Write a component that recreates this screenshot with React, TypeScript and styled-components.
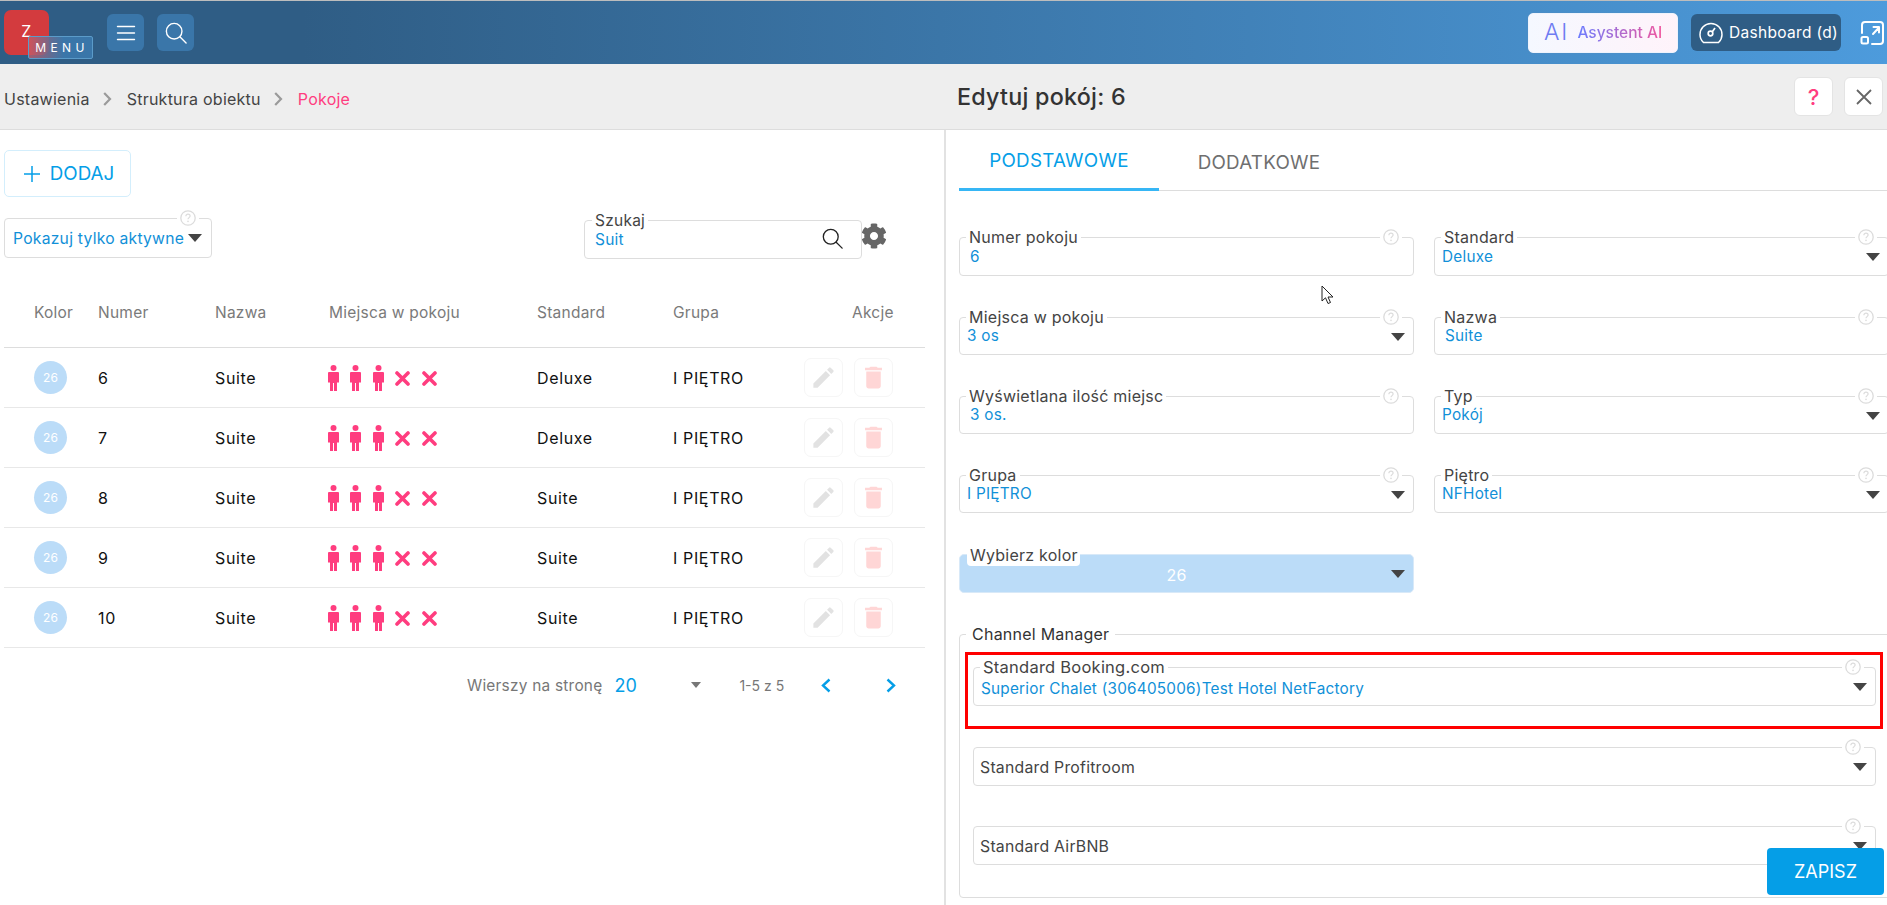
import React from "react";
import styled, { createGlobalStyle } from "styled-components";
import { MdEdit, MdDelete } from "react-icons/md";
import { FaCog } from "react-icons/fa";

const Global = createGlobalStyle`
  html, body { margin: 0; padding: 0; height: 905px; overflow: hidden; background: #fff; }
  body { font-family: Inter, "Liberation Sans", sans-serif; font-size: 16px; color: #333; letter-spacing: 0.015em; }
  * { box-sizing: border-box; }
`;

const Page = styled.div`
  position: relative;
  width: 1887px;
  height: 905px;
  overflow: hidden;
  display: flex;
  flex-direction: column;
  border-top: 1px solid #bdbdbd;
`;

const TopBar = styled.header`
  height: 63px;
  flex: none;
  display: flex;
  align-items: center;
  padding: 0 3px 0 4px;
  background: linear-gradient(90deg, #2f5d85 0%, #2f5d85 16%, #4d9bdc 100%);
`;

const Logo = styled.div`
  position: relative;
  width: 45px;
  height: 45px;
  border-radius: 7px;
  background: #d33b3e;
  color: #fff;
  font-size: 16px;
  display: flex;
  align-items: center;
  justify-content: center;
  padding-bottom: 3px;
  flex: none;
`;

const MenuTag = styled.div`
  position: absolute;
  left: 24px;
  top: 26px;
  width: 65px;
  height: 23px;
  border: 1px solid #5b9bc9;
  border-radius: 2px;
  background: linear-gradient(90deg, rgba(205, 90, 100, 0.75), #3a76a9 55%);
  font-size: 12px;
  letter-spacing: 4.4px;
  display: flex;
  align-items: center;
  justify-content: center;
  padding-left: 3px;
`;

const SquareButton = styled.button`
  width: 37px;
  height: 37px;
  border: 0;
  border-radius: 6px;
  background: #3a76a9;
  display: flex;
  align-items: center;
  justify-content: center;
  padding: 0;
  flex: none;
`;

const MenuSquare = styled(SquareButton)`
  margin-left: 58px;
  margin-right: 13px;
`;

const Spacer = styled.div`
  flex: 1;
`;

const AiButton = styled.button`
  width: 150px;
  height: 40px;
  border: 1px solid #eef3fc;
  border-radius: 5px;
  background: linear-gradient(90deg, #f5f8ff, #fff3fa);
  display: flex;
  align-items: center;
  justify-content: center;
  gap: 8px;
  padding: 0;
  font-family: inherit;
  box-shadow: 0 0 0 1px rgba(90, 140, 190, 0.2);
`;

const AiMark = styled.span`
  font-size: 23px;
  font-weight: 300;
  color: #6f7cf2;
  letter-spacing: 2px;
  line-height: 1;
`;

const AiText = styled.span`
  font-size: 15.5px;
  font-weight: 500;
  letter-spacing: 0;
  background: linear-gradient(90deg, #6a7cff, #f0589f);
  -webkit-background-clip: text;
  background-clip: text;
  color: transparent;
`;

const DashButton = styled.button`
  width: 150px;
  height: 37px;
  margin-left: 13px;
  border: 0;
  border-radius: 6px;
  background: #2f5d85;
  color: #fff;
  font-family: inherit;
  font-size: 15.5px;
  letter-spacing: 0.02em;
  display: flex;
  align-items: center;
  gap: 6px;
  padding: 0 0 0 8px;
`;

const ExpandLink = styled.span`
  margin-left: 19px;
  display: flex;
`;

const CrumbBar = styled.div`
  height: 66px;
  flex: none;
  display: flex;
  align-items: center;
  background: #eee;
  border-bottom: 1px solid #ddd;
  padding-right: 4px;
`;

const Crumbs = styled.nav`
  width: 945px;
  padding: 4px 0 0 4px;
  display: flex;
  align-items: center;
  font-size: 16px;
  color: #444;
`;

const CrumbCurrent = styled.span`
  color: #ff3d7f;
`;

const CrumbSep = styled.span`
  display: flex;
  margin: 0 15px 0 13px;
`;

const Title = styled.h1`
  margin: 0;
  padding-left: 12px;
  font-size: 23.3px;
  font-weight: 500;
  color: #333;
  flex: 1;
`;

const BarButton = styled.button`
  width: 39px;
  height: 39px;
  margin-left: 11px;
  border: 1px solid #e4e4e4;
  border-radius: 6px;
  background: #fff;
  color: #ff3d7f;
  font-family: inherit;
  font-size: 22px;
  font-weight: 500;
  padding: 0;
  display: flex;
  align-items: center;
  justify-content: center;
`;

const Main = styled.main`
  flex: 1;
  display: flex;
  min-height: 0;
`;

const LeftPane = styled.section`
  width: 946px;
  flex: none;
  border-right: 2px solid #e2e2e2;
  padding: 20px 20px 0 4px;
`;

const AddButton = styled.button`
  width: 127px;
  height: 47px;
  border: 1px solid #d3eefc;
  border-radius: 5px;
  background: #fff;
  color: #059ee7;
  font-family: inherit;
  font-size: 18.8px;
  display: flex;
  align-items: center;
  justify-content: center;
  gap: 10px;
  padding: 0 0 0 3px;
`;

const FilterRow = styled.div`
  display: flex;
  margin-top: 21px;
  height: 40px;
`;

const FilterSelect = styled.div`
  position: relative;
  width: 208px;
  height: 40px;
  border: 1px solid #ddd;
  border-radius: 4px;
  display: flex;
  align-items: center;
  justify-content: space-between;
  padding: 0 9px 0 8px;
  color: #1190d8;
  font-size: 15.7px;
`;

const SearchBox = styled.div`
  position: relative;
  width: 278px;
  height: 39px;
  margin-left: 372px;
  margin-top: 2px;
  border: 1px solid #ddd;
  border-radius: 4px;
  padding: 9px 0 0 10px;
  color: #1190d8;
  font-size: 15.5px;
`;

const SearchLabel = styled.span`
  position: absolute;
  left: 7px;
  top: -9px;
  padding: 0 3px;
  background: #fff;
  color: #444;
  font-size: 15.5px;
  line-height: 18px;
`;

const SearchIcon = styled.span`
  position: absolute;
  right: 18px;
  top: 7px;
  display: flex;
`;

const GearWrap = styled.span`
  margin: 5px 0 0 -1px;
  display: flex;
  color: #666;
  height: 26px;
  width: 26px;
`;

const Grid = styled.div`
  display: grid;
  grid-template-columns: 64px 117px 114px 208px 136px 131px 90px;
  padding-left: 30px;
  width: 921px;
  align-items: center;
`;

const HeadRow = styled(Grid)`
  margin-top: 30px;
  height: 60px;
  padding-bottom: 10px;
  border-bottom: 1px solid #ddd;
  color: #7a7a7a;
  font-size: 15.5px;
`;

const AkcjeHead = styled.span`
  padding-left: 48px;
`;

const Row = styled(Grid)`
  height: 60px;
  border-bottom: 1px solid #e8e8e8;
  color: #111;
  font-size: 16px;
  letter-spacing: 0.04em;
`;

const RowText = styled.span`
  padding-top: 1px;
`;

const ColorDot = styled.span`
  width: 33px;
  height: 33px;
  border-radius: 50%;
  background: #bbdcf8;
  color: #fff;
  font-size: 12px;
  letter-spacing: 0;
  display: flex;
  align-items: center;
  justify-content: center;
`;

const Seats = styled.span`
  display: flex;
  align-items: center;
  height: 27px;
  margin-left: -1px;
`;

const SeatSlot = styled.span`
  width: 22.3px;
  display: flex;
  justify-content: flex-start;
`;

const CrossSlot = styled.span`
  width: 27px;
  display: flex;
  margin-top: 2px;
`;

const Actions = styled.span`
  display: flex;
  gap: 11px;
`;

const ActionButton = styled.button<{ $tone: string }>`
  width: 39px;
  height: 39px;
  padding: 0;
  border: 1px solid #f6f6f6;
  border-radius: 7px;
  background: #fff;
  color: ${(p) => p.$tone};
  display: flex;
  align-items: center;
  justify-content: center;
`;

const Pager = styled.div`
  display: flex;
  align-items: center;
  height: 34px;
  margin-top: 20px;
  padding-left: 463px;
  color: #777;
  font-size: 15.4px;
`;

const PagerSize = styled.span`
  width: 77px;
  margin-left: 12px;
  color: #059ee7;
  font-size: 18px;
`;

const PagerCount = styled.span`
  width: 44px;
  margin-left: 38px;
  margin-right: 38px;
  font-size: 14px;
  letter-spacing: 0;
  white-space: nowrap;
`;

const PagerArrow = styled.span<{ $gap?: number }>`
  display: flex;
  margin-left: ${(p) => p.$gap ?? 0}px;
`;

const RightPane = styled.section`
  flex: 1;
  min-width: 0;
  overflow: hidden;
  padding-left: 13px;
`;

const RightInner = styled.div`
  width: 930px;
`;

const Tabs = styled.div`
  display: flex;
  height: 61px;
  border-bottom: 1px solid #ddd;
`;

const Tab = styled.div<{ $active?: boolean }>`
  width: 200px;
  height: 61px;
  display: flex;
  align-items: center;
  justify-content: center;
  padding-top: 3px;
  font-size: 18.8px;
  color: ${(p) => (p.$active ? "#059ee7" : "#6f6f6f")};
  border-bottom: ${(p) => (p.$active ? "3px solid #36b6f5" : "0")};
`;

const FormGrid = styled.div`
  display: grid;
  grid-template-columns: 455px 455px;
  grid-template-rows: 39px 38px 38px 38px;
  column-gap: 20px;
  row-gap: 41px;
  margin-top: 46px;
`;

const Field = styled.div`
  position: relative;
  height: 100%;
  border: 1px solid #ddd;
  border-radius: 4px;
  background: #fff;
`;

const TallField = styled(Field)`
  height: 39px;
`;

const FieldLabel = styled.span`
  position: absolute;
  left: 6px;
  top: -10px;
  padding: 0 3px;
  background: #fff;
  color: #444;
  font-size: 16px;
  line-height: 18px;
  white-space: nowrap;
`;

const FieldValue = styled.span<{ $select?: boolean; $top?: number }>`
  position: absolute;
  left: ${(p) => (p.$select ? 7 : 10)}px;
  top: ${(p) => p.$top ?? 9}px;
  color: #1190d8;
  font-size: 15.3px;
  line-height: 18px;
  white-space: nowrap;
`;

const FieldPlaceholder = styled.span`
  position: absolute;
  left: 6px;
  top: 11px;
  color: #444;
  font-size: 15.8px;
  line-height: 18px;
`;

const HelpBadge = styled.span`
  position: absolute;
  right: 11px;
  top: -11px;
  width: 22px;
  height: 20px;
  background: #fff;
  display: flex;
  align-items: center;
  justify-content: center;
`;

const FilterHelp = styled(HelpBadge)`
  right: 12px;
  top: -11px;
`;

const Caret = styled.span<{ $tone?: string; $w?: number }>`
  width: 0;
  height: 0;
  border-left: ${(p) => (p.$w ?? 14) / 2}px solid transparent;
  border-right: ${(p) => (p.$w ?? 14) / 2}px solid transparent;
  border-top: ${(p) => ((p.$w ?? 14) / 2) + 1}px solid ${(p) => p.$tone ?? "#444"};
  flex: none;
`;

const FieldCaret = styled(Caret)`
  position: absolute;
  right: 8px;
  top: 15px;
`;

const ColorField = styled.div`
  position: relative;
  height: 39px;
  margin-top: 41px;
  width: 455px;
  border: 1px solid #d8e9f8;
  border-radius: 5px;
  background: #bbdcf8;
  color: #fff;
  display: flex;
  align-items: center;
  justify-content: center;
  padding: 2px 20px 0 0;
  font-size: 16px;
`;

const ColorLabel = styled(FieldLabel)`
  border-radius: 4px;
  top: -8px;
  left: 7px;
  line-height: 16px;
  padding: 0 2px 3px 3px;
`;

const Channel = styled.div`
  position: relative;
  margin-top: 41px;
  height: 264px;
  border: 1px solid #ddd;
  border-radius: 4px;
  padding: 17px 5px 0 5px;
  width: 940px;
`;

const ChannelLegend = styled.span`
  position: absolute;
  left: 6px;
  top: -10px;
  padding: 0 6px;
  background: #fff;
  color: #333;
  font-size: 16px;
  line-height: 18px;
`;

const Highlight = styled.div`
  width: 918px;
  height: 77px;
  border: 3px solid #f00;
  padding: 12px 4px 0 5px;
`;

const BookingLabel = styled(FieldLabel)`
  font-size: 16.5px;
`;

const ChannelFields = styled.div`
  width: 903px;
  margin: 18px 0 0 8px;
  display: flex;
  flex-direction: column;
  gap: 40px;
`;

const SaveButton = styled.button`
  position: absolute;
  left: 1767px;
  top: 847px;
  width: 117px;
  height: 47px;
  border: 0;
  border-radius: 4px;
  background: #059ee7;
  color: #fff;
  font-family: inherit;
  font-size: 18px;
  padding: 0;
`;

const Pointer = styled.svg`
  position: absolute;
  left: 1321px;
  top: 284px;
`;

const Help = () => (
  <svg width="16" height="16" viewBox="0 0 16 16" fill="none">
    <circle cx="8" cy="8" r="7.2" stroke="#dcdcdc" strokeWidth="1.3" />
    <path d="M5.9 6.2c0-1.2 1-2 2.1-2s2.1.8 2.1 1.9c0 1.5-2.1 1.6-2.1 3.2" stroke="#dcdcdc" strokeWidth="1.2" />
    <circle cx="8" cy="11.4" r=".8" fill="#dcdcdc" />
  </svg>
);

const Magnifier = ({ size, color, sw }: { size: number; color: string; sw: number }) => (
  <svg width={size} height={size} viewBox="0 0 24 24" fill="none" stroke={color} strokeWidth={sw} strokeLinecap="round">
    <circle cx="10" cy="10" r="8.5" />
    <path d="M16.2 16.2 23 23" />
  </svg>
);

const Chevron = () => (
  <svg width="9" height="14" viewBox="0 0 9 14" fill="none" stroke="#9a9a9a" strokeWidth="2.2">
    <path d="M1.2 1 7 7l-5.8 6" />
  </svg>
);

const Person = () => (
  <svg width="11" height="26" viewBox="0 0 11 26" fill="#ff3d7f">
    <circle cx="5.5" cy="3" r="3" />
    <path d="M1 7h9a1 1 0 0 1 1 1v9.5H9V26H6V18H5v8H2v-8.500H0V8a1 1 0 0 1 1-1z" />
  </svg>
);

const Cross = () => (
  <svg width="15" height="15" viewBox="0 0 15 15" stroke="#ff3d7f" strokeWidth="3.6" strokeLinecap="round">
    <path d="M2 2l11 11M13 2 2 13" />
  </svg>
);

const PagerChevron = ({ left }: { left?: boolean }) => (
  <svg width="10" height="15" viewBox="0 0 10 15" fill="none" stroke="#059ee7" strokeWidth="2.4" style={left ? { transform: "scaleX(-1)" } : undefined}>
    <path d="M1.500 1.500 8 7.500l-6.500 6" />
  </svg>
);

const rooms = [
  { nr: "6", std: "Deluxe" },
  { nr: "7", std: "Deluxe" },
  { nr: "8", std: "Suite" },
  { nr: "9", std: "Suite" },
  { nr: "10", std: "Suite" },
];

const fields = [
  { label: "Numer pokoju", value: "6", top: 10 },
  { label: "Standard", value: "Deluxe", select: true, top: 10 },
  { label: "Miejsca w pokoju", value: "3 os", select: true },
  { label: "Nazwa", value: "Suite" },
  { label: "Wyświetlana ilość miejsc", value: "3 os." },
  { label: "Typ", value: "Pokój", select: true },
  { label: "Grupa", value: "I PIĘTRO", select: true },
  { label: "Piętro", value: "NFHotel", select: true },
];

export default function App() {
  return (
    <Page>
      <Global />
      <TopBar>
        <Logo>
          Z<MenuTag>MENU</MenuTag>
        </Logo>
        <MenuSquare aria-label="menu">
          <svg width="20" height="16" viewBox="0 0 20 16" stroke="#fff" strokeWidth="1.4" strokeLinecap="round">
            <path d="M1.500 1.500h17M1.500 8h17M1.500 14.500h17" />
          </svg>
        </MenuSquare>
        <SquareButton aria-label="szukaj">
          <Magnifier size={22} color="#fff" sw={1.5} />
        </SquareButton>
        <Spacer />
        <AiButton>
          <AiMark>AI</AiMark>
          <AiText>Asystent AI</AiText>
        </AiButton>
        <DashButton>
          <svg width="24" height="24" viewBox="0 0 24 24" fill="none" stroke="#fff" strokeWidth="1.5">
            <path d="M4.500 21.500a11 11 0 1 1 15 0z" />
            <circle cx="11.500" cy="12.500" r="2.300" strokeWidth="1.700" />
            <path d="M13.500 10.500 16 7" strokeWidth="1.700" />
          </svg>
          Dashboard (d)
        </DashButton>
        <ExpandLink>
          <svg width="24" height="24" viewBox="0 0 24 24" fill="none" stroke="#fff" strokeWidth="2" strokeLinecap="round" strokeLinejoin="round">
            <path d="M2 12V4a3 3 0 0 1 3-3h15a3 3 0 0 1 3 3v16a3 3 0 0 1-3 3H12" />
            <path d="M13 13 19 6.500M13.500 6h5.500v5.500" />
            <rect x="1.500" y="16" width="6.500" height="6.500" rx="1.500" />
          </svg>
        </ExpandLink>
      </TopBar>

      <CrumbBar>
        <Crumbs>
          Ustawienia
          <CrumbSep><Chevron /></CrumbSep>
          Struktura obiektu
          <CrumbSep><Chevron /></CrumbSep>
          <CrumbCurrent>Pokoje</CrumbCurrent>
        </Crumbs>
        <Title>Edytuj pokój: 6</Title>
        <BarButton>?</BarButton>
        <BarButton aria-label="zamknij">
          <svg width="16" height="16" viewBox="0 0 16 16" stroke="#666" strokeWidth="1.800">
            <path d="M1 1l14 14M15 1 1 15" />
          </svg>
        </BarButton>
      </CrumbBar>

      <Main>
        <LeftPane>
          <AddButton>
            <svg width="16" height="16" viewBox="0 0 16 16" stroke="#059ee7" strokeWidth="1.500">
              <path d="M8 0v16M0 8h16" />
            </svg>
            DODAJ
          </AddButton>
          <FilterRow>
            <FilterSelect>
              Pokazuj tylko aktywne
              <Caret />
              <FilterHelp><Help /></FilterHelp>
            </FilterSelect>
            <SearchBox>
              <SearchLabel>Szukaj</SearchLabel>
              Suit
              <SearchIcon><Magnifier size={21} color="#222" sw={1.500} /></SearchIcon>
            </SearchBox>
            <GearWrap><FaCog size={26} /></GearWrap>
          </FilterRow>

          <HeadRow>
            <span>Kolor</span>
            <span>Numer</span>
            <span>Nazwa</span>
            <span>Miejsca w pokoju</span>
            <span>Standard</span>
            <span>Grupa</span>
            <AkcjeHead>Akcje</AkcjeHead>
          </HeadRow>
          {rooms.map((r) => (
            <Row key={r.nr}>
              <ColorDot>26</ColorDot>
              <RowText>{r.nr}</RowText>
              <RowText>Suite</RowText>
              <Seats>
                <SeatSlot><Person /></SeatSlot>
                <SeatSlot><Person /></SeatSlot>
                <SeatSlot><Person /></SeatSlot>
                <CrossSlot><Cross /></CrossSlot>
                <CrossSlot><Cross /></CrossSlot>
              </Seats>
              <RowText>{r.std}</RowText>
              <RowText>I PIĘTRO</RowText>
              <Actions>
                <ActionButton $tone="#e2e2e2"><MdEdit size={27} /></ActionButton>
                <ActionButton $tone="#ffd6d6"><MdDelete size={29} /></ActionButton>
              </Actions>
            </Row>
          ))}
          <Pager>
            Wierszy na stronę
            <PagerSize>20</PagerSize>
            <Caret $tone="#777" $w={10} />
            <PagerCount>1-5 z 5</PagerCount>
            <PagerArrow><PagerChevron left /></PagerArrow>
            <PagerArrow $gap={55}><PagerChevron /></PagerArrow>
          </Pager>
        </LeftPane>

        <RightPane>
          <RightInner>
            <Tabs>
              <Tab $active>PODSTAWOWE</Tab>
              <Tab>DODATKOWE</Tab>
            </Tabs>
            <FormGrid>
              {fields.map((f) => (
                <Field key={f.label}>
                  <FieldLabel>{f.label}</FieldLabel>
                  <FieldValue $select={f.select} $top={f.top}>{f.value}</FieldValue>
                  <HelpBadge><Help /></HelpBadge>
                  {f.select && <FieldCaret />}
                </Field>
              ))}
            </FormGrid>
            <ColorField>
              <ColorLabel>Wybierz kolor</ColorLabel>
              26
              <FieldCaret />
            </ColorField>
            <Channel>
              <ChannelLegend>Channel Manager</ChannelLegend>
              <Highlight>
                <TallField>
                  <BookingLabel>Standard Booking.com</BookingLabel>
                  <FieldValue $select $top={12}>Superior Chalet (306405006)Test Hotel NetFactory</FieldValue>
                  <HelpBadge><Help /></HelpBadge>
                  <FieldCaret />
                </TallField>
              </Highlight>
              <ChannelFields>
                <TallField>
                  <FieldPlaceholder>Standard Profitroom</FieldPlaceholder>
                  <HelpBadge><Help /></HelpBadge>
                  <FieldCaret />
                </TallField>
                <TallField>
                  <FieldPlaceholder>Standard AirBNB</FieldPlaceholder>
                  <HelpBadge><Help /></HelpBadge>
                  <FieldCaret />
                </TallField>
              </ChannelFields>
            </Channel>
          </RightInner>
        </RightPane>
      </Main>

      <SaveButton>ZAPISZ</SaveButton>
      <Pointer width="13" height="20" viewBox="0 0 13 20" fill="#fff" stroke="#222" strokeWidth="1">
        <path d="M1 1v15l3.500-3.200L7 18.500l2.500-1L7 12h5z" />
      </Pointer>
    </Page>
  );
}
